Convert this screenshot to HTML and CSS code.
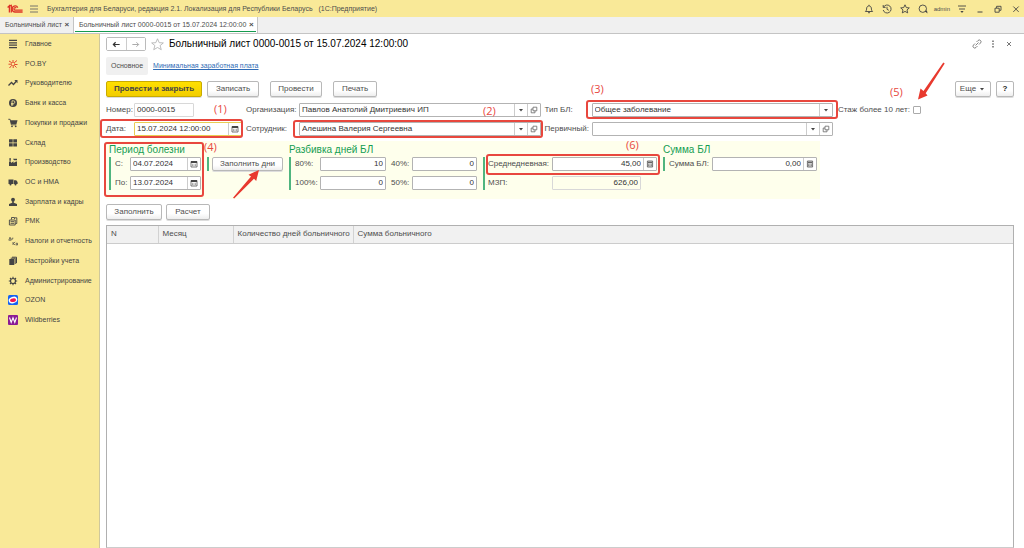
FILE: index.html
```html
<!DOCTYPE html>
<html lang="ru">
<head>
<meta charset="utf-8">
<title>Больничный лист 0000-0015</title>
<link rel="stylesheet" href="styles.css">
</head>
<body>
<svg class="defs" aria-hidden="true">
  <symbol id="i-cal" viewBox="0 0 8 8"><path d="M1 1.5h6v5.5H1z" fill="#fff" stroke="#555" stroke-width=".8"/><path d="M1 1h6v2H1z" fill="#444"/><path d="M2.2 4.3h3.6M2.2 5.6h3.6" stroke="#777" stroke-width=".9" stroke-dasharray=".8 .6"/></symbol>
  <symbol id="i-calc" viewBox="0 0 8 8"><path d="M1.4 1h5.2v6H1.4z" fill="#ddd" stroke="#555" stroke-width=".8"/><path d="M2 2.4h4" stroke="#555"/><path d="M2.2 4.2h3.6M2.2 5.6h3.6" stroke="#555" stroke-width=".8" stroke-dasharray=".8 .6"/></symbol>
  <symbol id="i-open" viewBox="0 0 8 8"><path d="M3 1.2h3.8v3.6H3zM3 3H1.2v3.8H5V4.8" fill="none" stroke="#666" stroke-width=".8"/></symbol>
  <symbol id="i-drop" viewBox="0 0 8 8"><path d="M2 3h4L4 5.400z" fill="#444"/></symbol>
</svg>

<header class="titlebar">
  <svg class="logo" viewBox="0 0 16 10"><g fill="none" stroke="#dd3326" stroke-width="1.300"><path d="M.6 3.400 2.400 1.800V8.600M4.300 8.600V1.300L2.400 1.800"/><path d="M10.800 3.600A3 3 0 1 0 8.400 8h7.200"/><path d="M9.300 4.200A1.300 1.300 0 1 0 8.400 6.200h7.200"/></g></svg>
  <button class="bare" aria-label="Меню"><svg viewBox="0 0 10 10"><path d="M1 2h8M1 5h8M1 8h8" stroke="#666" stroke-width=".9"/></svg></button>
  <span class="app-name">Бухгалтерия для Беларуси, редакция 2.1. Локализация для Республики Беларусь&nbsp;&nbsp; (1С:Предприятие)</span>
  <div class="tools">
    <button class="bare" aria-label="Уведомления"><svg viewBox="0 0 10 10"><path d="M1.4 7.5C2.6 6.5 2.5 5.5 2.7 4 3 1.200 7 1.200 7.300 4c.2 1.500.1 2.500 1.300 3.500zM4 8.700h2M5 .8v1" fill="none" stroke="#444" stroke-width=".9"/></svg></button>
    <button class="bare" aria-label="История"><svg viewBox="0 0 10 10"><path d="M1.500 3.200A4 4 0 1 1 1.200 6M1.200 1v2.400h2.400M5 2.800V5.300l1.800 1" fill="none" stroke="#444" stroke-width=".9"/></svg></button>
    <button class="bare" aria-label="Избранное"><svg viewBox="0 0 10 10"><path d="m5 .8 1.300 2.800 3 .3-2.300 2 .7 3L5 7.400 2.300 8.900l.7-3-2.300-2 3-.3z" fill="none" stroke="#444" stroke-width=".9"/></svg></button>
    <button class="bare" aria-label="Поиск"><svg viewBox="0 0 10 10"><circle cx="4.800" cy="4.700" r="3.700" fill="none" stroke="#444" stroke-width=".9"/><path d="m6.500 7 3 2.500-.5-3z" fill="#444"/></svg></button>
    <span class="user">admin</span>
    <button class="bare" aria-label="Настройки"><svg viewBox="0 0 10 10"><path d="M1 2h8M2 5h6" stroke="#444" stroke-width=".9"/><path d="M3.400 7h3.200L5 9z" fill="#444"/></svg></button>
    <button class="bare" aria-label="Свернуть"><svg viewBox="0 0 10 10"><path d="M2.500 8h5" stroke="#444"/></svg></button>
    <button class="bare" aria-label="Развернуть"><svg viewBox="0 0 10 10"><path d="M2 4.200h4.200v4H2zM3.600 4V2.300H8v4H6.400" fill="none" stroke="#444" stroke-width=".9"/></svg></button>
    <button class="bare" aria-label="Закрыть"><svg viewBox="0 0 10 10"><path d="m2.300 2.500 5.400 5.400M7.700 2.500 2.300 7.900" stroke="#444" stroke-width=".9"/></svg></button>
  </div>
</header>

<nav class="tabs" aria-label="Открытые окна">
  <div class="tab"><span>Больничный лист</span><button class="x" aria-label="Закрыть вкладку">×</button></div>
  <div class="tab active"><span>Больничный лист 0000-0015 от 15.07.2024 12:00:00</span><button class="x" aria-label="Закрыть вкладку">×</button></div>
</nav>

<div class="body">
  <nav class="sidebar" aria-label="Разделы">
    <a href="#"><svg viewBox="0 0 10 10"><path d="M1 1.400h8M1 3.800h8M1 6.200h8M1 8.600h8" stroke="#444" stroke-width="1.200"/></svg>Главное</a>
    <a href="#"><svg viewBox="0 0 10 10"><path d="M1 2l2.500 1.500M5 1v2.500M9 1.500 6.500 3.500M.5 5.200h3M6.500 5.500h3M3.500 6.500 1.500 9M5.200 6.500V9M6.500 6.500l2 2" stroke="#e2492c" stroke-width="1"/><path d="M3.500 3.500h3v3h-3z" fill="none" stroke="#e2492c" stroke-width=".6"/></svg>PO.BY</a>
    <a href="#"><svg viewBox="0 0 10 10"><path d="M.5 7.500 3.500 4.500l2 2L8.500 3" fill="none" stroke="#444" stroke-width="1.300"/><path d="M6.300 2H9.500v3.200z" fill="#444"/></svg>Руководителю</a>
    <a href="#"><svg viewBox="0 0 10 10"><circle cx="5" cy="5" r="4" fill="#444"/><path d="M4 8V2.800h1.500a1.300 1.300 0 0 1 0 2.700H3M3 6.700h2.500" fill="none" stroke="#f9e998" stroke-width=".8"/></svg>Банк и касса</a>
    <a href="#"><svg viewBox="0 0 10 10"><path d="M.3 1.300h1.800l1.300 5.500h5" fill="none" stroke="#444" stroke-width=".9"/><path d="M2.300 2.300h7.200L8.500 6H3.200z" fill="#444"/><circle cx="4" cy="8.300" r=".9" fill="#444"/><circle cx="7.700" cy="8.300" r=".9" fill="#444"/></svg>Покупки и продажи</a>
    <a href="#"><svg viewBox="0 0 10 10"><path d="M1 1.300h3.700v3.200H1zM5.300 1.300H9v3.200H5.300zM1 5.200h3.700v3.200H1zM5.300 5.200H9v3.200H5.300z" fill="#444"/></svg>Склад</a>
    <a href="#"><svg viewBox="0 0 10 10"><path d="M1 9V4.500h2V6l2.500-1.700V6L8 4.500h1V9zM1.300 3.800 1.500 1h1.200l.2 2.800zM5 1.800h4v1.500H6z" fill="#444"/></svg>Производство</a>
    <a href="#"><svg viewBox="0 0 10 10"><path d="M.5 2.500h5V7h-5zM6 3.300h2.200L9.600 5v2H6z" fill="#444"/><circle cx="2.500" cy="7.500" r="1" fill="#444"/><circle cx="7.500" cy="7.500" r="1" fill="#444"/></svg>ОС и НМА</a>
    <a href="#"><svg viewBox="0 0 10 10"><circle cx="5" cy="2.700" r="1.900" fill="#444"/><path d="M4.200 4h1.600v1.800L9 7v2H1V7l3.200-1.200z" fill="#444"/></svg>Зарплата и кадры</a>
    <a href="#"><svg viewBox="0 0 10 10"><path d="M1.400 4h5.800v5H1.400zM3.500 3.500V1.500h3V3M7.500 7.500h1.300V1.800H7" fill="none" stroke="#444" stroke-width=".9"/><path d="M2.500 5.200h3.700v1H2.500zM2.500 7.200h3.700v.7H2.500z" fill="#444"/></svg>РМК</a>
    <a href="#"><svg viewBox="0 0 10 10"><path d="M.8 4.200 2 1.200 3.200 4.200H.8M4 4V2.200h1.400M5 6v3M7.200 6 5.200 7.500 7.200 9M8.200 7.200h1.300V9H8.200z" fill="none" stroke="#444" stroke-width=".7"/></svg>Налоги и отчетность</a>
    <a href="#"><svg viewBox="0 0 10 10"><path d="M1.300 3h5v6h-5z" fill="#444"/><path d="M2.700 2.200h4.500V8M4 1.200h4.500v6" fill="none" stroke="#444" stroke-width="1"/></svg>Настройки учета</a>
    <a href="#"><svg viewBox="0 0 10 10"><circle cx="5" cy="5" r="2.500" fill="none" stroke="#444" stroke-width="1.200"/><path d="M5 .8v1.500M5 7.700v1.500M.8 5h1.500M7.700 5h1.500M2 2l1 1M7 7l1 1M8 2 7 3M3 7 2 8" stroke="#444" stroke-width="1.100"/></svg>Администрирование</a>
    <a href="#"><svg viewBox="0 0 10 10"><rect width="10" height="10" rx="1.500" fill="#1662f2"/><ellipse cx="5" cy="5" rx="4.400" ry="3.200" fill="#fff" transform="rotate(-20 5 5)"/><ellipse cx="5" cy="5.200" rx="3" ry="1.800" fill="#f5134f" transform="rotate(-10 5 5)"/></svg>OZON</a>
    <a href="#"><svg viewBox="0 0 10 10"><rect width="10" height="10" rx="1" fill="#8a1b95"/><path d="M1.500 2.500 3.200 7.500 5 2.800 6.800 7.500 8.500 2.500" fill="none" stroke="#fff" stroke-width="1.100"/></svg>Wildberries</a>
  </nav>

  <main class="main">
    <div class="heading">
      <div class="history">
        <button aria-label="Назад"><svg viewBox="0 0 10 10"><path d="M1.500 5h7M4 2.500 1.500 5 4 7.500" fill="none" stroke="#333" stroke-width="1.300"/></svg></button>
        <button aria-label="Вперед"><svg viewBox="0 0 10 10"><path d="M1.500 5h7M6 2.500 8.500 5 6 7.500" fill="none" stroke="#aaa" stroke-width="1.100"/></svg></button>
      </div>
      <button class="bare star" aria-label="В избранное"><svg viewBox="0 0 10 10"><path d="m5 .6 1.300 3 3.200.2-2.500 2 .9 3.200L5 7.300 2.100 9l.9-3.200-2.500-2 3.200-.2z" fill="none" stroke="#aaa" stroke-width=".6"/></svg></button>
      <h1>Больничный лист 0000-0015 от 15.07.2024 12:00:00</h1>
      <div class="doc-tools">
        <button class="bare" aria-label="Ссылка"><svg viewBox="0 0 10 10"><path d="M4.500 3 6 1.500a1.700 1.700 0 0 1 2.500 2.500L7 5.500M5.500 7 4 8.500A1.700 1.700 0 0 1 1.500 6L3 4.500M3.500 6.500l3-3" fill="none" stroke="#666" stroke-width=".8"/></svg></button>
        <button class="bare" aria-label="Ещё"><svg viewBox="0 0 10 10"><path d="M5 1.500v1.500M5 4.300v1.500M5 7.100v1.500" stroke="#555" stroke-width="1.300"/></svg></button>
        <button class="bare" aria-label="Закрыть"><svg viewBox="0 0 10 10"><path d="m3 3 4 4M7 3 3 7" stroke="#666" stroke-width=".9"/></svg></button>
      </div>
    </div>

    <nav class="sections">
      <span class="current">Основное</span>
      <a href="#">Минимальная заработная плата</a>
    </nav>

    <div class="commands">
      <button class="btn primary">Провести и закрыть</button>
      <button class="btn w52">Записать</button>
      <button class="btn w52">Провести</button>
      <button class="btn w44">Печать</button>
      <span class="spring"></span>
      <button class="btn w36">Еще<svg><use href="#i-drop"/></svg></button>
      <button class="btn help">?</button>
    </div>

    <form class="doc">
      <div class="fields">
        <label for="num">Номер:</label>
        <div class="field ro short"><input id="num" value="0000-0015" readonly></div>
        <label for="org">Организация:</label>
        <div class="field"><input id="org" value="Павлов Анатолий Дмитриевич ИП"><button type="button" aria-label="Выбрать"><svg><use href="#i-drop"/></svg></button><button type="button" aria-label="Открыть"><svg><use href="#i-open"/></svg></button></div>
        <label for="kind">Тип БЛ:</label>
        <div class="field"><select id="kind"><option>Общее заболевание</option></select><span class="cell"><svg><use href="#i-drop"/></svg></span></div>
        <div class="check"><label for="exp">Стаж более 10 лет:</label><input id="exp" type="checkbox"></div>

        <label for="date">Дата:</label>
        <div class="field focus"><input id="date" value="15.07.2024 12:00:00"><button type="button" aria-label="Календарь"><svg><use href="#i-cal"/></svg></button></div>
        <label for="emp">Сотрудник:</label>
        <div class="field"><input id="emp" value="Алешина Валерия Сергеевна"><button type="button" aria-label="Выбрать"><svg><use href="#i-drop"/></svg></button><button type="button" aria-label="Открыть"><svg><use href="#i-open"/></svg></button></div>
        <label for="prim">Первичный:</label>
        <div class="field"><input id="prim"><button type="button" aria-label="Выбрать"><svg><use href="#i-drop"/></svg></button><button type="button" aria-label="Открыть"><svg><use href="#i-open"/></svg></button></div>
      </div>

      <div class="panel">
        <section class="group period">
          <h2>Период болезни</h2>
          <div class="rows">
            <label for="from">С:</label>
            <div class="field"><input id="from" value="04.07.2024"><button type="button" aria-label="Календарь"><svg><use href="#i-cal"/></svg></button></div>
            <label for="to">По:</label>
            <div class="field"><input id="to" value="13.07.2024"><button type="button" aria-label="Календарь"><svg><use href="#i-cal"/></svg></button></div>
          </div>
        </section>
        <section class="group fill">
          <h2></h2>
          <div class="rows"><button type="button" class="btn">Заполнить дни</button></div>
        </section>
        <section class="group split">
          <h2>Разбивка дней БЛ</h2>
          <div class="rows">
            <label for="p80">80%:</label><div class="field num"><input id="p80" value="10"></div>
            <label class="second" for="p40">40%:</label><div class="field num"><input id="p40" value="0"></div>
            <label for="p100">100%:</label><div class="field num"><input id="p100" value="0"></div>
            <label class="second" for="p50">50%:</label><div class="field num"><input id="p50" value="0"></div>
          </div>
        </section>
        <section class="group avg">
          <h2></h2>
          <div class="rows">
            <label for="avg">Среднедневная:</label>
            <div class="field num"><input id="avg" value="45,00"><button type="button" aria-label="Калькулятор"><svg><use href="#i-calc"/></svg></button></div>
            <label for="mzp">МЗП:</label>
            <div class="field num ro mzp"><input id="mzp" value="626,00" readonly></div>
          </div>
        </section>
        <section class="group sum">
          <h2>Сумма БЛ</h2>
          <div class="rows">
            <label for="sum">Сумма БЛ:</label>
            <div class="field num"><input id="sum" value="0,00"><button type="button" aria-label="Калькулятор"><svg><use href="#i-calc"/></svg></button></div>
          </div>
        </section>
      </div>
    </form>

    <div class="table-tools">
      <button class="btn w56">Заполнить</button>
      <button class="btn w44">Расчет</button>
    </div>

    <div class="grid-box">
      <table>
        <thead><tr><th class="c-n">N</th><th class="c-month">Месяц</th><th class="c-days">Количество дней больничного</th><th>Сумма больничного</th></tr></thead>
      </table>
    </div>

    <div class="frame f1"></div>
    <div class="frame f2"></div>
    <div class="frame f3"></div>
    <div class="frame f4"></div>
    <div class="frame f6"></div>
    <span class="note n1">(1)</span>
    <span class="note n2">(2)</span>
    <span class="note n3">(3)</span>
    <span class="note n4">(4)</span>
    <span class="note n5">(5)</span>
    <span class="note n6">(6)</span>
    <svg class="arrow a1" viewBox="0 0 28 30"><path d="M1 28.800 19 7.500l-2.500-1.700L27 1l-2.800 11-2.200-2.200L2.200 29.600z"/></svg>
    <svg class="arrow a2" viewBox="0 0 28 38"><path d="M26.300.5 6.500 29 3.500 26.500 1 37.500l9.500-4-1.800-2.200L27.700 1.400z"/></svg>
  </main>
</div>
</body>
</html>
```
FILE: styles.css
```css
* { box-sizing: border-box; }
body {
  margin: 0;
  height: 100vh;
  display: flex;
  flex-direction: column;
  overflow: hidden;
  background: #fff;
  color: #4d4d4d;
  font: 8px/10px "Liberation Sans", Arial, sans-serif;
}
.defs { position: absolute; width: 0; height: 0; }
button, input, select { font: inherit; color: inherit; margin: 0; }
.bare { flex: none; border: 0; padding: 0; background: none; width: 10px; height: 10px; }
.bare svg { display: block; width: 100%; height: 100%; }

.titlebar {
  flex: none;
  height: 17px;
  padding: 0 3px 0 7px;
  display: flex;
  align-items: center;
  background: #f9e998;
  font-size: 7px;
}
.logo { width: 16px; height: 10px; margin-right: 6px; }
.app-name { margin-left: 8px; white-space: nowrap; }
.tools { margin-left: auto; display: flex; align-items: center; gap: 8px; }
.user { font-size: 6px; margin: 0 -1px 0 -2px; }

.tabs {
  flex: none;
  height: 17px;
  display: flex;
  background: #f0f0f0;
  border-bottom: 1px solid #c4c4c4;
  font-size: 7px;
}
.tab {
  display: flex;
  align-items: center;
  gap: 2px;
  padding: 0 3px 0 5px;
  border-right: 1px solid #c4c4c4;
  white-space: nowrap;
}
.tab.active { position: relative; background: #fff; }
.tab.active::after {
  content: "";
  position: absolute;
  left: 1px;
  right: 1px;
  bottom: 1px;
  height: 1px;
  background: #159b4e;
}
.x { border: 0; padding: 0; background: none; width: 6px; font-size: 8px; font-weight: bold; }

.body { flex: 1; min-height: 0; display: flex; }
.sidebar {
  flex: none;
  width: 100px;
  padding-left: 8px;
  background: #f9e998;
  border-right: 1px solid #cfc89c;
  display: grid;
  grid-template-rows: repeat(15, 1fr);
  height: 100%;
  padding-bottom: 218px;
  font-size: 7px;
}
.sidebar a {
  display: flex;
  align-items: center;
  gap: 7px;
  color: #444;
  text-decoration: none;
  white-space: nowrap;
}
.sidebar svg { width: 10px; height: 10px; flex: none; }

.main {
  position: relative;
  flex: 1;
  min-width: 0;
  display: flex;
  flex-direction: column;
  padding: 3px 10px 0 6px;
}
.heading { display: flex; align-items: center; height: 14px; }
.history { display: flex; border: 1px solid #bbb; border-radius: 2px; width: 40px; height: 14px; }
.history button { flex: 1; border: 0; padding: 0; background: #fff; display: grid; place-items: center; }
.history button + button { border-left: 1px solid #ccc; }
.history svg { width: 9px; height: 9px; }
.star { width: 13px; height: 13px; margin: 0 5px; }
h1 { margin: 0; font-size: 10px; line-height: 14px; font-weight: normal; color: #000; white-space: nowrap; }
.doc-tools { margin-left: auto; display: flex; gap: 6px; }

.sections { display: flex; align-items: center; height: 18px; margin-top: 6px; gap: 5px; font-size: 7px; }
.current { padding: 4px 5px; background: #f0f0f0; border-radius: 2px; }
.sections a { color: #2f6bb5; }

.commands { display: flex; align-items: center; gap: 5px; margin-top: 6px; }
.spring { flex: 1; }
.btn {
  height: 16px;
  padding: 0 6px;
  border: 1px solid #b8b8b8;
  border-radius: 2px;
  background: linear-gradient(#fff 60%, #eee);
  box-shadow: 0 1px 0 #ddd;
  white-space: nowrap;
  display: flex;
  align-items: center;
  justify-content: center;
}
.btn svg { flex: none; width: 8px; height: 8px; margin-left: 2px; }
.primary { width: 96px; background: linear-gradient(#ffe000, #f2cd00); border-color: #c9ab00; font-weight: bold; color: #444; }
.w36 { width: 36px; }
.w44 { width: 44px; }
.w52 { width: 52px; margin-right: 6px; }
.w56 { width: 56px; }
.help { width: 18px; font-weight: bold; color: #222; }

.doc { margin: 0; }
.fields {
  display: grid;
  grid-template-columns: 28px 108px 57px 1fr 51px 1fr 181px;
  row-gap: 5px;
  margin-top: 6px;
  align-items: center;
}
.fields label { white-space: nowrap; }
.fields .field + label { padding-left: 4px; }
.field {
  display: flex;
  height: 14px;
  min-width: 0;
  border: 1px solid #b3b3b3;
  border-radius: 1px;
  background: #fff;
}
.field input, .field select {
  flex: 1;
  min-width: 0;
  width: 0;
  height: 12px;
  border: 0;
  padding: 0 2px 1px;
  background: none;
  outline: 0;
  appearance: none;
  color: #333;
}
.field button, .cell {
  width: 13px;
  padding: 0;
  border: 0;
  border-left: 1px solid #ccc;
  background: none;
  display: grid;
  place-items: center;
}
.field svg { width: 8px; height: 8px; }
.ro { border-color: #d8d8d8; }
.short { width: 60px; }
.focus { border-color: #e8cd53; }
.num input { text-align: right; }
.check { display: flex; align-items: center; gap: 3px; padding-left: 5px; }
.check input { appearance: none; width: 8px; height: 8px; border: 1px solid #aaa; border-radius: 1px; background: #fff; }

.panel {
  display: flex;
  width: max-content;
  height: 58px;
  margin-top: 5px;
  padding: 3px 3px 0;
  background: #feffec;
}
.group { margin-right: 6px; }
.group:last-child { margin-right: 0; }
h2 { margin: 0 0 1px; height: 12px; font-size: 10px; line-height: 12px; font-weight: normal; color: #149d52; white-space: nowrap; }
.rows {
  display: grid;
  gap: 5px 0;
  align-items: center;
  border-left: 2px solid #4fb57f;
  padding-left: 4px;
}
.rows label { white-space: nowrap; }
.period .rows { grid-template-columns: 15px 71px; }
.fill .rows { padding-left: 3px; }
.fill .btn { width: 71px; height: 14px; }
.split .rows { grid-template-columns: 25px 66px 26px 65px; }
.second { padding-left: 5px; }
.avg .rows { grid-template-columns: 64px 105px; padding-left: 3px; }
.mzp { width: 89px; background: none; }
.sum .rows { grid-template-columns: 43px 105px; }

.table-tools { display: flex; gap: 4px; margin-top: 5px; }
.grid-box { flex: 1; margin-top: 5px; border: 1px solid #b0b0b0; border-bottom-color: #ccc; }
table { width: 100%; table-layout: fixed; border-collapse: collapse; }
th {
  height: 17px;
  padding: 0 4px;
  text-align: left;
  font-weight: normal;
  background: #f1f1f1;
  border-bottom: 1px solid #ccc;
  border-right: 1px solid #d2d2d2;
  white-space: nowrap;
}
th:last-child { border-right: 0; }
.c-n { width: 51px; }
.c-month { width: 75px; }
.c-days { width: 120px; }

.frame { position: absolute; border: 2px solid #e8473e; border-radius: 3px; pointer-events: none; }
.f1 { left: 0; top: 85px; width: 143px; height: 19px; }
.f2 { left: 193px; top: 86px; width: 250px; height: 18px; }
.f3 { left: 486px; top: 66px; width: 252px; height: 19px; }
.f4 { left: 4px; top: 108px; width: 100px; height: 55px; }
.f6 { left: 386px; top: 120px; width: 174px; height: 21px; }
.note { position: absolute; font: 11px/12px "Open Sans", sans-serif; color: #e8473e; }
.n1 { left: 114px; top: 69px; }
.n2 { left: 383px; top: 71px; }
.n3 { left: 491px; top: 49px; }
.n4 { left: 104px; top: 107px; }
.n5 { left: 790px; top: 52px; }
.n6 { left: 526px; top: 105px; }
.arrow { position: absolute; fill: #e8392e; pointer-events: none; }
.a1 { left: 132px; top: 135px; width: 28px; height: 30px; }
.a2 { left: 817px; top: 28px; width: 28px; height: 38px; }
```
